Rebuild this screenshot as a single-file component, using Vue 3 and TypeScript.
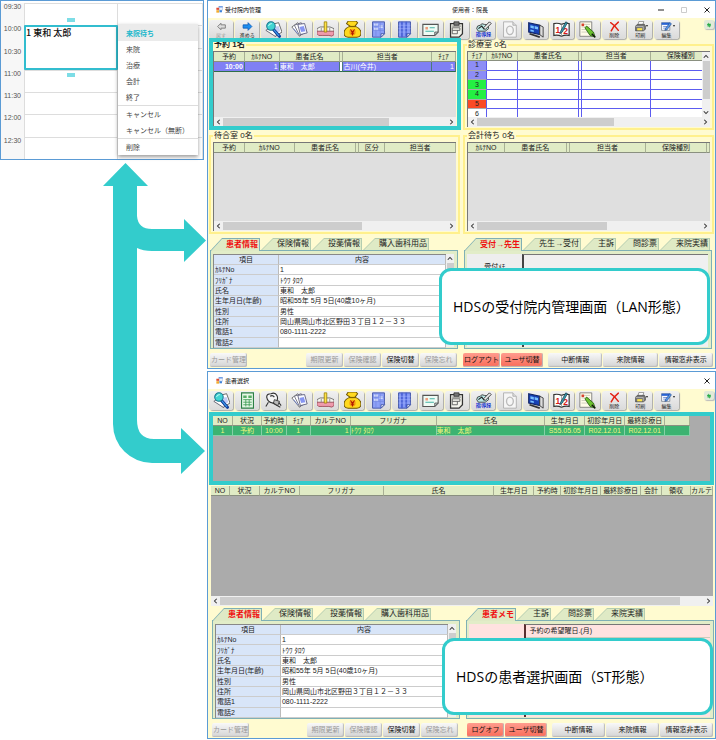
<script setup lang="ts">
interface Column { label: string; w: number; align?: 'left' | 'center' | 'right' }
interface Panel {
  title: string
  cols: Column[]
  rows: string[][]
  thumb: number
  kind: string
  vertical?: boolean
}
interface Tool { icon: string; label?: string; name: string; disabled?: boolean }
interface Screen {
  id: string
  title: string
  user?: string
  tools: Tool[]
  tabs: string[]
  memo: string
  memoText: string
  logout: string
  callout: string
}

const times = ['09:30', '10:00', '10:30', '11:00', '11:30', '12:00', '12:30']
const menu: string[][] = [
  ['来院待ち', '来院', '治療', '会計', '終了'],
  ['キャンセル', 'キャンセル（無断）'],
  ['削除'],
]

const commonTools: Tool[] = [
  { icon: 'cards', name: 'カルテ' },
  { icon: 'denture', name: '技工' },
  { icon: 'money', name: '会計' },
  { icon: 'grid', name: '予約表' },
  { icon: 'stripes', name: '日計表' },
  { icon: 'postcard', name: 'はがき' },
  { icon: 'clipboard', name: '文書' },
  { icon: 'guide', name: '指導録' },
  { icon: 'ring', name: '印影' },
  { icon: 'screen', name: '画像' },
  { icon: 'half', name: '二号用紙' },
  { icon: 'note', name: 'メモ' },
  { icon: 'cross', label: '削除', name: '削除' },
  { icon: 'printer', label: '印刷', name: '印刷' },
  { icon: 'edit', label: '編集', name: '編集' },
]

const screens: Screen[] = [
  {
    id: 'lan',
    title: '受付院内管理',
    user: '使用者：院長',
    tools: [
      { icon: 'back', label: '戻す', name: '戻す', disabled: true },
      { icon: 'forward', label: '進める', name: '進める' },
      { icon: 'search', name: '検索' },
      ...commonTools,
    ],
    tabs: ['受付→先生', '先生→受付', '主訴', '問診票', '来院実績'],
    memo: '受付ﾒﾓ',
    memoText: '',
    logout: 'ログアウト',
    callout: 'HDSの受付院内管理画面（LAN形態）',
  },
  {
    id: 'st',
    title: '患者選択',
    tools: [
      { icon: 'search', name: '検索' },
      { icon: 'sheet', name: '一覧' },
      { icon: 'tooth', name: '診療' },
      ...commonTools,
    ],
    tabs: ['患者メモ', '主訴', '問診票', '来院実績'],
    memo: '',
    memoText: '予約の希望曜日.(月)',
    logout: 'ログオフ',
    callout: 'HDSの患者選択画面（ST形態）',
  },
]

const panels: Panel[] = [
  {
    title: '予約 1名',
    kind: 'booked',
    cols: [
      { label: '予約', w: 31, align: 'right' },
      { label: 'ｶﾙﾃNO', w: 35, align: 'right' },
      { label: '患者氏名', w: 61 },
      { label: '', w: 3 },
      { label: '担当者', w: 89 },
      { label: 'ﾁｪｱ', w: 24, align: 'right' },
    ],
    rows: [['10:00', '1', '東和　太郎', '', '古川(今井)', '1']],
    thumb: 74,
  },
  {
    title: '診療室 0名',
    kind: 'rooms',
    cols: [
      { label: 'ﾁｪｱ', w: 19, align: 'center' },
      { label: 'ｶﾙﾃNO', w: 31 },
      { label: '患者氏名', w: 62 },
      { label: '', w: 3 },
      { label: '担当者', w: 70 },
      { label: '保険種別', w: 51 },
    ],
    rows: ['1', '2', '3', '4', '5', '6'].map((n) => [n, '', '', '', '', '']),
    thumb: 61,
    vertical: true,
  },
  {
    title: '待合室 0名',
    kind: 'empty',
    cols: [
      { label: '予約', w: 31 },
      { label: 'ｶﾙﾃNO', w: 50 },
      { label: '患者氏名', w: 62 },
      { label: '', w: 3 },
      { label: '区分', w: 26 },
      { label: '担当者', w: 71 },
    ],
    rows: [],
    thumb: 62,
  },
  {
    title: '会計待ち 0名',
    kind: 'empty',
    cols: [
      { label: 'ｶﾙﾃNO', w: 37 },
      { label: '患者氏名', w: 62 },
      { label: '', w: 3 },
      { label: '担当者', w: 77 },
      { label: '保険種別', w: 61 },
      { label: '', w: 3 },
    ],
    rows: [],
    thumb: 58,
  },
]

const selectCols: Column[] = [
  { label: 'NO', w: 20, align: 'center' },
  { label: '状況', w: 29, align: 'center' },
  { label: '予約時', w: 25, align: 'center' },
  { label: 'ﾁｪｱ', w: 24, align: 'center' },
  { label: 'カルテNO', w: 40, align: 'right' },
  { label: 'フリガナ', w: 86 },
  { label: '氏名', w: 109 },
  { label: '生年月日', w: 40, align: 'center' },
  { label: '初診年月日', w: 40, align: 'center' },
  { label: '最終診療日', w: 40, align: 'center' },
  { label: '', w: 25 },
]
const selectRow = ['1', '予約', '10:00', '1', '1', 'ﾄｳﾜ ﾀﾛｳ', '東和　太郎', 'S55.05.05', 'R02.12.01', 'R02.12.01', '']
const listCols: Column[] = [
  { label: 'NO', w: 19 },
  { label: '状況', w: 30 },
  { label: 'カルテNO', w: 40 },
  { label: 'フリガナ', w: 84 },
  { label: '氏名', w: 111 },
  { label: '生年月日', w: 40 },
  { label: '予約時', w: 27 },
  { label: '初診年月日', w: 40 },
  { label: '最終診療日', w: 40 },
  { label: '会計', w: 21 },
  { label: '領収', w: 29 },
  { label: 'カルテ', w: 22 },
]

const infoTabs = ['患者情報', '保険情報', '投薬情報', '購入歯科用品']
const info: [string, string][] = [
  ['ｶﾙﾃNo', '1'],
  ['ﾌﾘｶﾞﾅ', 'ﾄｳﾜ ﾀﾛｳ'],
  ['氏名', '東和　太郎'],
  ['生年月日(年齢)', '昭和55年 5月 5日(40歳10ヶ月)'],
  ['性別', '男性'],
  ['住所', '岡山県岡山市北区野田３丁目１２－３３'],
  ['電話1', '080-1111-2222'],
  ['電話2', ''],
]
const insurance = ['期限更新', '保険確認', '保険切替', '保険忘れ']
const infoButtons = ['中断情報', '来院情報', '情報窓非表示']

function share(cols: Column[], c: Column): string {
  const total = cols.reduce((sum, item) => sum + item.w, 0)
  return `${(c.w / total) * 100}%`
}
</script>

<template>
  <svg class="symbols" aria-hidden="true">
    <symbol id="i-back" viewBox="0 0 20 20">
      <path d="M3 10 9 4v3h8v6H9v3z" fill="#ddd" stroke="#777" stroke-width="1.6" />
    </symbol>
    <symbol id="i-forward" viewBox="0 0 20 20">
      <path d="M18 10 11 3v4H2v6h9v4z" fill="#1d8ff0" stroke="#0b56b5" stroke-width="1.4" />
    </symbol>
    <symbol id="i-search" viewBox="0 0 20 20">
      <path d="M8 4l8-2 4 11-8 5z" fill="#fff" stroke="#555" />
      <path d="M1 11l6-4 7 10-2 1z" fill="#fff" stroke="#556" />
      <path d="M10 7l6-1 2 6-5 2z" fill="#c3ccf5" />
      <path d="M10 10l7 8" stroke="#143f9c" stroke-width="3.6" stroke-linecap="round" />
      <path d="M10.500 10.500l6 7" stroke="#3fa0ef" stroke-width="1.2" />
      <circle cx="7" cy="6" r="5" fill="#42d5d2" stroke="#17748f" stroke-width="1.2" />
      <path d="M4 6q1-3 4-3" stroke="#d9ffff" fill="none" />
    </symbol>
    <symbol id="i-cards" viewBox="0 0 20 20">
      <path d="M1 7l7-5 9 10-7 6z" fill="#fff" stroke="#666" />
      <path d="M4 5l8-3 6 11-8 4z" fill="#fff" stroke="#667" />
      <path d="M8 4l8-1 3 11-8 2z" fill="#f8faff" stroke="#557" />
      <path d="M10 7l5-1 2 6-5 1z" fill="#8795f1" />
      <path d="M3 9l5 6" stroke="#7084d8" />
    </symbol>
    <symbol id="i-denture" viewBox="0 0 20 20">
      <path d="M0 9q3-3 9-2 7-1 11 2v4H0z" fill="#f5f5f0" stroke="#666" />
      <path d="M0 12h20v4q-2 3-6 1H6q-5 1-6-2z" fill="#ef9aac" stroke="#9a4b59" />
      <path d="M5 8v4m10-4v4" stroke="#888" />
      <path d="M8.500 1h3v12h-3z" fill="#ffe344" stroke="#9c8410" />
    </symbol>
    <symbol id="i-money" viewBox="0 0 20 20">
      <path d="M5 0h9l2 2-3 4q7 3 7 8 0 5-5 5H5q-5 0-5-5 0-5 7-8L3 3z" fill="#ffd91e" stroke="#6c5400" stroke-width="1.2" />
      <path d="M6 6.500h8" stroke="#806300" stroke-width="1.500" />
      <circle cx="10" cy="13" r="4" fill="#f7ad13" />
      <path d="M7.500 10l2.500 3 2.500-3M10 13v4M8 13h4M8 15h4" stroke="#b31800" stroke-width="1.2" fill="none" />
    </symbol>
    <symbol id="i-grid" viewBox="0 0 20 20">
      <path d="M3 1h14v14l-4 4H3z" fill="#8da0f7" stroke="#3a4ca2" />
      <path d="M5 3h4v3H5zm6 2h4v3h-4zM5 8h4v3H5z" fill="#e8edff" />
      <path d="M3 6h14M3 11h14M7 1v18m5-18v18" stroke="#6f83e0" stroke-width=".8" />
      <path d="M13 19v-4h4z" fill="#fff" stroke="#3a4ca2" />
    </symbol>
    <symbol id="i-stripes" viewBox="0 0 20 20">
      <path d="M3 1h14v14l-4 4H3z" fill="#8498f5" stroke="#3348a1" />
      <path d="M7 1v18m5-18v17" stroke="#4a62d6" stroke-width="2" />
      <path d="M3 5h14M3 9h14M3 13h14" stroke="#a9b7ff" stroke-width=".6" />
      <path d="M13 19v-4h4z" fill="#fff" stroke="#3348a1" />
    </symbol>
    <symbol id="i-postcard" viewBox="0 0 20 20">
      <path d="M1 4h18v9l-4 4H1z" fill="#effbf5" stroke="#555" stroke-width="1.3" />
      <path d="M4 7h3v3H4z" fill="#ee9b7d" />
      <path d="M9 8h6M4 12h10" stroke="#46b3a5" stroke-width="1.3" />
      <path d="M15 17v-4h4z" fill="#bcc" stroke="#555" />
    </symbol>
    <symbol id="i-clipboard" viewBox="0 0 20 20">
      <path d="M3 3h14v12l-4 4H3z" fill="#f5f5ed" stroke="#333" stroke-width="1.500" />
      <path d="M7 1h6v4H7z" fill="#777" stroke="#333" />
      <path d="M5 8h9v3H5zm0 3v4h6v-4M5 6h10" fill="none" stroke="#555" />
    </symbol>
    <symbol id="i-guide" viewBox="0 0 20 20">
      <path d="M2 9q0-4 4-4 2-3 5-1 5 0 5 5l-4 3H4z" fill="#bbe9e7" stroke="#333" />
      <path d="M4 9l4-3 3 4" fill="none" stroke="#222" stroke-width="1.3" />
      <path d="M10 8l7-7 2 2-7 7z" fill="#eee" stroke="#222" />
      <text x="1" y="18" class="glyph blue">指導録</text>
    </symbol>
    <symbol id="i-ring" viewBox="0 0 20 20">
      <path d="M3 1h11l4 4v14H3z" fill="#f6f6f6" stroke="#aaa" />
      <path d="M14 1v4h4" fill="#ddd" stroke="#aaa" />
      <ellipse cx="10.500" cy="11" rx="4" ry="5" fill="none" stroke="#bbb" stroke-width="1.6" />
    </symbol>
    <symbol id="i-screen" viewBox="0 0 20 20">
      <path d="M2 2l13 3v11L2 13z" fill="#1741b5" stroke="#102463" stroke-width="1.3" />
      <path d="M4 5l4 1v3L4 8zm5 1l4 1v3l-4-1zm-5 4l4 1v2l-4-1z" fill="#78c1ff" />
      <path d="M15 5l4 2v12l-4-3z" fill="#ddd" stroke="#333" />
      <path d="M3 15l12 4" stroke="#333" stroke-width="2" />
    </symbol>
    <symbol id="i-half" viewBox="0 0 20 20">
      <path d="M1 3q5-1 9 1 4-2 9-1v14q-5-1-9 1-4-2-9-1z" fill="#fff" stroke="#333" stroke-width="1.4" />
      <path d="M10 4v14" stroke="#999" />
      <text x="3" y="14" class="glyph red">1</text>
      <text x="12" y="15" class="glyph red">2</text>
      <path d="M9 12l6-11 2 1-6 11-3 2z" fill="#3a9db0" stroke="#134" stroke-width=".8" />
    </symbol>
    <symbol id="i-note" viewBox="0 0 20 20">
      <path d="M1 1h14v17H1z" fill="#fffbe9" stroke="#777" />
      <path d="M3 4h10M3 7h10M3 10h10M3 13h10" stroke="#c9c9b7" />
      <path d="M3 3h3v3H3z" fill="#d9412d" />
      <path d="M9 6l8 7 2 6-6-2-6-9z" fill="#6cc22f" stroke="#285f14" />
      <path d="M15 15l4 4" stroke="#111" stroke-width="1.6" />
    </symbol>
    <symbol id="i-cross" viewBox="0 0 20 20">
      <path d="M3 3q8 5 14 14M17 2Q8 9 4 18" fill="none" stroke="#e32214" stroke-width="2.6" stroke-linecap="round" />
    </symbol>
    <symbol id="i-printer" viewBox="0 0 20 20">
      <path d="M5 8l2-7h9l-2 7z" fill="#fff" stroke="#555" />
      <path d="M1 9l4-3h12l2 3v6l-4 3H1z" fill="#777" stroke="#333" />
      <path d="M1 10h14v7" fill="none" stroke="#ddd" />
      <path d="M4 13h9v4H4z" fill="#ffe64b" />
    </symbol>
    <symbol id="i-edit" viewBox="0 0 20 20">
      <path d="M1 3h15v14H1z" fill="#f7f9ff" stroke="#456" />
      <path d="M1 3h15v4H1z" fill="#2762d3" />
      <path d="M4 10h8M4 13h6" stroke="#6b88d0" stroke-width="1.500" />
      <path d="M8 14l8-11 3 2-8 11-4 1z" fill="#5596e8" stroke="#123b82" />
    </symbol>
    <symbol id="i-sheet" viewBox="0 0 20 20">
      <path d="M3 1h14v18H3z" fill="#e6f7e6" stroke="#2c8045" stroke-width="1.3" />
      <path d="M5 4h4v3H5zm6 0h4v3h-4z" fill="#57ad65" />
      <path d="M5 9h10M5 12h10M5 15h10M8 9v8m4-8v8" stroke="#3f9c55" />
    </symbol>
    <symbol id="i-tooth" viewBox="0 0 20 20">
      <path d="M2 6q0-4 5-4 5-2 7 2 2 4-1 8l-4 1q-6-1-7-7z" fill="#f5f5f5" stroke="#333" stroke-width="1.3" />
      <path d="M6 5q3-2 5 1M4 12l-3 5M9 13l9 5M12 11l4 1 3 4" fill="none" stroke="#333" stroke-width="1.3" />
      <path d="M11 9l6 2-2 5-5-3z" fill="#bbb" stroke="#333" />
    </symbol>
    <symbol id="i-refresh" viewBox="0 0 20 20">
      <path d="M3 9l6-7v4h7v4H9v3zM17 12l-6 7v-4H5v-3h6V9z" fill="#26ad46" />
    </symbol>
    <symbol id="i-form" viewBox="0 0 20 20">
      <path d="M8 1h11v11H8z" fill="#e9f2ff" stroke="#8099c4" />
      <path d="M8 1h11v3H8z" fill="#437fdd" />
      <path d="M1 5h8v6H1z" fill="#e04b33" />
      <path d="M1 12h8v7H1z" fill="#f2ac2e" />
      <path d="M10 12h7v6h-7z" fill="#3e82da" />
    </symbol>
    <symbol id="i-left" viewBox="0 0 8 8"><path d="M5 1 2 4l3 3" class="chev" /></symbol>
    <symbol id="i-right" viewBox="0 0 8 8"><path d="M3 1l3 3-3 3" class="chev" /></symbol>
    <symbol id="i-up" viewBox="0 0 8 8"><path d="M1 5l3-3 3 3" class="chev" /></symbol>
    <symbol id="i-down" viewBox="0 0 8 8"><path d="M1 3l3 3 3-3" class="chev" /></symbol>
  </svg>

  <main class="page">
    <div class="side">
      <section class="calendar" aria-label="予約カレンダー">
        <div v-for="t in times" :key="t" class="slot">
          <time>{{ t }}</time><span class="lane"></span><span class="lane"></span>
        </div>
        <div class="event">1 東和 太郎</div>
        <div class="menu" role="menu">
          <div v-for="(group, g) in menu" :key="g" class="menu-group">
            <button
              v-for="item in group"
              :key="item"
              type="button"
              role="menuitem"
              :class="{ current: item === '来院待ち' }"
            >{{ item }}</button>
          </div>
        </div>
      </section>
      <svg class="arrows" viewBox="103 163 104 312" aria-hidden="true">
        <path
          d="M125.500 163 148 186H137V216Q138 229 152 229H184V219L206 240.500 184 262V251H152Q143 251 137 248V420Q137 439 154 439H181V428L205 451 181 474V463H152A39 39 0 0 1 113 424V186H103Z"
          fill="#33cccc"
        />
      </svg>
    </div>

    <div class="screens">
      <section v-for="s in screens" :key="s.id" class="window" :class="s.id">
        <header class="titlebar">
          <svg class="app-icon"><use href="#i-form" /></svg>
          <h1>{{ s.title }}</h1>
          <span v-if="s.user" class="user">{{ s.user }}</span>
          <div class="controls">
            <button v-if="s.user" type="button" aria-label="最小化"><svg viewBox="0 0 8 8"><path d="M1 4h6" /></svg></button>
            <button v-if="s.user" type="button" aria-label="最大化" disabled><svg viewBox="0 0 8 8"><path d="M1.500 1.500h5v5h-5z" /></svg></button>
            <button type="button" aria-label="閉じる"><svg viewBox="0 0 8 8"><path d="M1.500 1.500l5 5m0-5l-5 5" /></svg></button>
          </div>
        </header>

        <div class="toolbar">
          <div class="tools">
            <button
              v-for="tool in s.tools"
              :key="tool.icon"
              type="button"
              class="tool"
              :class="{ labelled: tool.label }"
              :aria-label="tool.name"
              :disabled="tool.disabled"
            >
              <svg><use :href="'#i-' + tool.icon" /></svg>
              <span v-if="tool.label">{{ tool.label }}</span>
              <i v-if="tool.icon === 'printer' || tool.icon === 'edit'" class="caret"></i>
            </button>
          </div>
          <button type="button" class="refresh" aria-label="更新"><svg><use href="#i-refresh" /></svg></button>
        </div>

        <div v-if="s.id === 'lan'" class="panels">
          <fieldset v-for="p in panels" :key="p.title" class="panel" :class="p.kind">
            <legend>{{ p.title }}</legend>
            <div class="box">
              <div class="view">
                <div class="table-area">
                  <table class="grid">
                    <colgroup><col v-for="(c, i) in p.cols" :key="i" :style="{ width: share(p.cols, c) }" /></colgroup>
                    <thead><tr><th v-for="(c, i) in p.cols" :key="i">{{ c.label }}</th></tr></thead>
                    <tbody>
                      <tr v-for="(r, n) in p.rows" :key="n">
                        <td v-for="(v, i) in r" :key="i" :class="p.cols[i].align">{{ v }}</td>
                      </tr>
                    </tbody>
                  </table>
                </div>
                <div v-if="p.vertical" class="vbar" aria-hidden="true">
                  <svg><use href="#i-up" /></svg><div class="vtrack"><i></i></div><svg><use href="#i-down" /></svg>
                </div>
              </div>
              <div class="hbar" aria-hidden="true">
                <svg><use href="#i-left" /></svg>
                <div class="track"><i :style="{ width: p.thumb + '%' }"></i></div>
                <svg><use href="#i-right" /></svg>
              </div>
            </div>
          </fieldset>
        </div>

        <template v-else>
          <div class="selected">
            <table class="grid">
              <colgroup><col v-for="(c, i) in selectCols" :key="i" :style="{ width: share(selectCols, c) }" /></colgroup>
              <thead><tr><th v-for="(c, i) in selectCols" :key="i">{{ c.label }}</th></tr></thead>
              <tbody><tr><td v-for="(v, i) in selectRow" :key="i" :class="selectCols[i].align">{{ v }}</td></tr></tbody>
            </table>
          </div>
          <div class="list">
            <table class="grid">
              <colgroup><col v-for="(c, i) in listCols" :key="i" :style="{ width: share(listCols, c) }" /></colgroup>
              <thead><tr><th v-for="(c, i) in listCols" :key="i">{{ c.label }}</th></tr></thead>
            </table>
            <div class="void"></div>
            <div class="hbar" aria-hidden="true">
              <svg><use href="#i-left" /></svg><div class="track"><i :style="{ width: '95%' }"></i></div><svg><use href="#i-right" /></svg>
            </div>
          </div>
        </template>

        <div class="lower">
          <div class="card">
            <div class="tabs" role="tablist">
              <button v-for="(t, i) in infoTabs" :key="t" type="button" role="tab" :aria-selected="i === 0" :class="{ on: i === 0 }"><span>{{ t }}</span></button>
            </div>
            <div class="pane">
              <table class="info">
                <colgroup><col class="key" /><col /></colgroup>
                <thead><tr><th>項目</th><th>内容</th></tr></thead>
                <tbody>
                  <tr v-for="row in info" :key="row[0]"><th scope="row">{{ row[0] }}</th><td>{{ row[1] }}</td></tr>
                </tbody>
              </table>
              <div class="vbar" aria-hidden="true">
                <svg><use href="#i-up" /></svg><div class="vtrack"><i></i></div><svg><use href="#i-down" /></svg>
              </div>
            </div>
          </div>
          <div class="card">
            <div class="tabs" role="tablist">
              <button v-for="(t, i) in s.tabs" :key="t" type="button" role="tab" :aria-selected="i === 0" :class="{ on: i === 0 }"><span>{{ t }}</span></button>
            </div>
            <div class="pane">
              <div class="memo-label">{{ s.memo }}</div>
              <div class="memo-body"><p>{{ s.memoText }}</p></div>
            </div>
          </div>
        </div>

        <footer class="actions">
          <div class="half">
            <button type="button" class="act card-act" disabled>カード管理</button>
            <button v-for="b in insurance" :key="b" type="button" class="act" :disabled="b !== '保険切替'">{{ b }}</button>
          </div>
          <div class="half right-half">
            <button type="button" class="act red">{{ s.logout }}</button>
            <button type="button" class="act red wide">ユーザ切替</button>
            <button v-for="b in infoButtons" :key="b" type="button" class="act grow">{{ b }}</button>
          </div>
        </footer>

        <p class="callout">{{ s.callout }}</p>
      </section>
    </div>
  </main>
</template>

<style>
body {
  background: #fff;
}
</style>

<style scoped>
* {
  box-sizing: border-box;
}
.symbols {
  display: none;
}
.glyph {
  font: bold 6px 'Liberation Sans', 'Noto Sans CJK JP', sans-serif;
}
.glyph.blue {
  fill: #1733d0;
}
.glyph.red {
  fill: #d81818;
  font-size: 10px;
}
.chev {
  fill: none;
  stroke: #333;
  stroke-width: 1.4;
}
.page {
  display: grid;
  grid-template-columns: 204px minmax(0, 1fr);
  gap: 3px;
  font: 7px/10px 'Liberation Sans', 'Noto Sans CJK JP', sans-serif;
  color: #222;
}
button {
  font: inherit;
  color: inherit;
  border: 0;
  padding: 0;
  margin: 0;
  background: none;
}

/* calendar */
.calendar {
  position: relative;
  height: 160px;
  border: 1px solid #5b9bd5;
  padding-top: 2px;
  display: grid;
  grid-template-rows: repeat(7, 1fr);
}
.slot {
  display: grid;
  grid-template-columns: 24px 93px 1fr;
}
.slot time {
  background: #f7f7f7;
  border-right: 1px solid #ddd;
  text-align: center;
  line-height: 7px;
  color: #555;
}
.lane {
  border-top: 1px solid #ddd;
  border-right: 1px solid #ddd;
}
.event {
  position: absolute;
  left: 23px;
  top: 24px;
  width: 94px;
  height: 45px;
  border: 2px solid #32bdcf;
  border-radius: 1px;
  background: #fff;
  font: 500 9px/12px 'Noto Sans CJK JP', sans-serif;
  color: #111;
}
.event::before,
.event::after {
  content: '';
  position: absolute;
  left: 41px;
  width: 8px;
  height: 4px;
  background: #7ddde6;
}
.event::before {
  top: -9px;
}
.event::after {
  bottom: -9px;
}
.menu {
  position: absolute;
  left: 117px;
  top: 23px;
  width: 80px;
  background: #fff;
  box-shadow: 0 2px 4px rgba(0, 0, 0, 0.4);
  font-family: 'Noto Sans CJK JP', sans-serif;
}
.menu-group + .menu-group {
  border-top: 1px solid #ddd;
}
.menu button {
  display: block;
  width: 100%;
  height: 16px;
  padding-left: 8px;
  text-align: left;
  color: #444;
}
.menu button.current {
  height: 17px;
  background: #ebebeb;
  color: #22b8cc;
  font-weight: bold;
}
.arrows {
  display: block;
  width: 104px;
  height: 312px;
  margin: 3px 0 0 103px;
}

/* windows */
.screens {
  display: grid;
  gap: 2px;
}
.window {
  position: relative;
  border: 1px solid #5b9bd5;
  background: #fffbd0;
  padding-bottom: 1px;
}
.titlebar {
  display: flex;
  align-items: center;
  height: 17px;
  background: #fff;
  padding: 0 4px 0 8px;
  font-size: 6px;
}
.titlebar h1 {
  flex: 1;
  margin: 0;
  font: inherit;
  color: #000;
}
.app-icon {
  width: 7px;
  height: 7px;
  margin-right: 2px;
}
.controls {
  flex: 1;
  display: flex;
  justify-content: flex-end;
  gap: 15px;
}
.user {
  margin-left: 4px;
}
.controls button {
  width: 8px;
  height: 8px;
}
.controls svg {
  display: block;
  width: 8px;
  height: 8px;
  fill: none;
  stroke: #222;
}
.controls button:disabled svg {
  stroke: #ccc;
}
.toolbar {
  display: flex;
  justify-content: space-between;
  height: 21px;
  padding: 2px 1px 0;
}
.st .toolbar {
  height: 23px;
}
.tools {
  display: grid;
  grid-template-columns: repeat(18, 1fr);
  gap: 2px;
  width: 93%;
}
.tool {
  position: relative;
  height: 19px;
  border-radius: 3px;
  background: linear-gradient(#f1f1f1, #dadada);
  box-shadow: 1px 1px 1px #aaa;
}
.tool svg {
  display: block;
  width: 17px;
  height: 17px;
  margin: 0 auto;
}
.tool.labelled {
  font-size: 5px;
  line-height: 7px;
}
.tool.labelled svg {
  width: 11px;
  height: 11px;
}
.tool.labelled span {
  display: block;
}
.tool:disabled {
  color: #999;
}
.caret {
  position: absolute;
  right: 4px;
  top: 5px;
  border: 1px solid transparent;
  border-top: 2px solid #222;
}
.refresh {
  width: 10px;
  height: 9px;
  border-radius: 2px;
  background: #e2ead8;
  box-shadow: 1px 1px 1px #bbb;
}
.refresh svg {
  display: block;
  width: 6px;
  height: 6px;
  margin: 0 auto;
}

/* grids */
.panels {
  display: grid;
  grid-template-columns: 1fr 1fr;
  grid-template-rows: 91px 104px;
  column-gap: 3px;
  padding: 0 1px;
}
.panel {
  position: relative;
  min-width: 0;
  margin: 0;
  border: 2px solid #fff08c;
  padding: 0 2px 1px;
  display: flex;
  flex-direction: column;
}
.panel legend {
  padding: 0 1px;
  line-height: 12px;
  font-size: 8px;
}
.booked legend {
  font-weight: bold;
}
.booked::after {
  content: '';
  position: absolute;
  inset: -13px -3px -2px -2px;
  border: 4px solid #33cccc;
}
.box {
  display: flex;
  flex-direction: column;
  height: 76px;
  border-top: 1px solid #777;
  border-left: 1px solid #777;
  background: #dfdfdf;
}
.empty .box {
  height: 89px;
}
.view {
  flex: 1;
  min-height: 0;
  display: flex;
}
.table-area {
  flex: 1;
  min-width: 0;
  overflow: hidden;
}
.grid {
  width: 100%;
  table-layout: fixed;
  border-collapse: separate;
  border-spacing: 0;
}
.grid th,
.grid td {
  height: 10px;
  padding: 0;
  line-height: 9px;
  white-space: nowrap;
  overflow: hidden;
}
.grid th {
  background: #e0ebc5;
  border-right: 1px solid #a8b094;
  border-bottom: 1px solid #8a9080;
  font-weight: normal;
  text-align: center;
}
.grid td {
  border-right: 1px solid #4a7a7a;
  border-bottom: 1px solid #2e6e4a;
}
.grid td.right {
  text-align: right;
  padding-right: 1px;
}
.grid td.center {
  text-align: center;
}
.booked td {
  background: #8080f4;
  color: #fff;
}
.booked td:first-child {
  font-weight: bold;
}
.booked td:nth-child(4) {
  background: #fff;
}
.rooms .grid {
  height: 67px;
}
.rooms .grid th,
.rooms .grid td {
  height: auto;
  line-height: 8px;
}
.rooms td {
  background: #fff;
  border-color: #5c5cf0;
}
.rooms th:last-child {
  padding-left: 8px;
  border-right: 0;
}
.rooms td:last-child {
  border-right: 0;
}
.rooms .grid td:first-child {
  border-bottom-color: #aaa;
}
.rooms tr:nth-child(-n + 2) td:first-child {
  background: #8d8df6;
}
.rooms tr:nth-child(3) td:first-child,
.rooms tr:nth-child(4) td:first-child {
  background: #24f043;
}
.rooms tr:nth-child(5) td:first-child {
  background: #fb4a25;
}
.rooms .grid td {
  border-color: #5c5cf0;
}
.hbar {
  display: flex;
  align-items: center;
  height: 10px;
  padding: 0 2px;
  background: #f0f0f0;
}
.hbar svg,
.vbar svg {
  flex: none;
  width: 6px;
  height: 6px;
}
.track {
  flex: 1;
  height: 8px;
  margin: 0 1px;
}
.track i {
  display: block;
  height: 100%;
  background: #cdcdcd;
}
.vbar {
  display: flex;
  flex-direction: column;
  align-items: center;
  width: 8px;
  padding: 2px 0;
  background: #f0f0f0;
}
.vtrack {
  flex: 1;
  width: 7px;
  padding-top: 1px;
}
.vtrack i {
  display: block;
  height: 80%;
  background: #cdcdcd;
}
.selected {
  height: 73px;
  margin: 0 1px;
  border: 4px solid #33cccc;
  background: #ababab;
}
.selected .grid {
  width: 96%;
}
.selected .grid td {
  background: #3cb371;
  color: #f2f57a;
  border-color: #86cfa6;
}
.list {
  margin: 1px 2px 0 3px;
}
.void {
  height: 100px;
  background: #ababab;
}

/* lower cards */
.lower {
  display: grid;
  grid-template-columns: 1fr 1fr;
  gap: 6px;
  margin: 4px 3px 0 2px;
}
.st .lower {
  margin: 2px 1px 0 4px;
}
.card {
  min-width: 0;
}
.tabs {
  display: flex;
  gap: 1px;
  height: 13px;
}
.tabs button {
  position: relative;
  height: 12px;
  padding: 0 2px 0 16px;
  font-size: 8px;
  line-height: 12px;
  white-space: nowrap;
  background: #b4cdb0;
  clip-path: polygon(12px 0, 100% 0, 100% 100%, 0 100%);
}
.tabs button::before {
  content: '';
  position: absolute;
  inset: 1px 1px 0 1px;
  background: #dfeac5;
  clip-path: polygon(11px 0, 100% 0, 100% 100%, 0 100%);
}
.tabs button.on {
  height: 13px;
  background: #7fb0b5;
  color: #f01010;
  font-weight: bold;
}
.tabs span {
  position: relative;
}
.pane {
  display: flex;
  height: 99px;
  margin-top: -1px;
  padding: 3px 3px 1px 2px;
  border: 1px solid #7fb0b5;
  background: #e2edc8;
}
.info {
  flex: 1;
  min-width: 0;
  height: 94px;
  table-layout: fixed;
  border-collapse: separate;
  border-spacing: 0;
  border-top: 1px solid #888;
  border-left: 1px solid #888;
  background: #fff;
}
.key {
  width: 28%;
}
.info th,
.info td {
  padding: 0 1px;
  line-height: 9px;
  font-weight: normal;
  text-align: left;
  white-space: nowrap;
  border-right: 1px solid #bbb;
  border-bottom: 1px solid #ccc;
}
.info th {
  background: #d8e5f8;
}
.info thead th {
  text-align: center;
}
.memo-label {
  width: 23%;
  padding-top: 8px;
  text-align: center;
  background: #eee;
}
.memo-body {
  flex: 1;
  border-top: 1px solid #777;
  border-left: 2px solid #444;
  background: #f0f0f0;
}
.memo-body p {
  margin: 0;
  padding: 1px 3px;
  min-height: 11px;
}
.st .memo-label,
.st .memo-body {
  background: #ffe2e0;
}
.st .memo-body p {
  border-bottom: 1px solid #ccb;
}
.st .memo-body {
  border-left-color: #5a2f2f;
}

/* bottom buttons */
.actions {
  display: grid;
  grid-template-columns: 1fr 1fr;
  gap: 3px;
  margin: 4px 2px 0;
}
.st .actions {
  margin: 4px 2px 0 4px;
}
.half {
  display: flex;
  gap: 1px;
  padding-right: 3px;
}
.right-half {
  padding: 0;
}
.st .right-half {
  padding-left: 3px;
}
.act {
  width: 37px;
  height: 14px;
  border-radius: 2px;
  background: linear-gradient(#f8f8f8, #d4d4d4);
  box-shadow: inset -1px -1px 1px #bbb;
  line-height: 12px;
  white-space: nowrap;
  color: #111;
}
.act:disabled {
  color: #999;
}
.card-act {
  margin-right: auto;
}
.act.red {
  width: 37px;
  background: linear-gradient(#ff9d8e, #fa6a58);
}
.act.red.wide {
  width: 42px;
  margin-right: 4px;
}
.act.grow {
  flex: 1;
}
.callout {
  position: absolute;
  right: 5px;
  bottom: 23px;
  width: 271px;
  height: 77px;
  margin: 0;
  padding-left: 11px;
  border: 3px solid #33cccc;
  border-radius: 12px;
  background: #fff;
  font: 14px/71px 'Open Sans', 'Noto Sans CJK JP', sans-serif;
  color: #000;
  white-space: nowrap;
}
.st .callout {
  right: 2px;
}
</style>
